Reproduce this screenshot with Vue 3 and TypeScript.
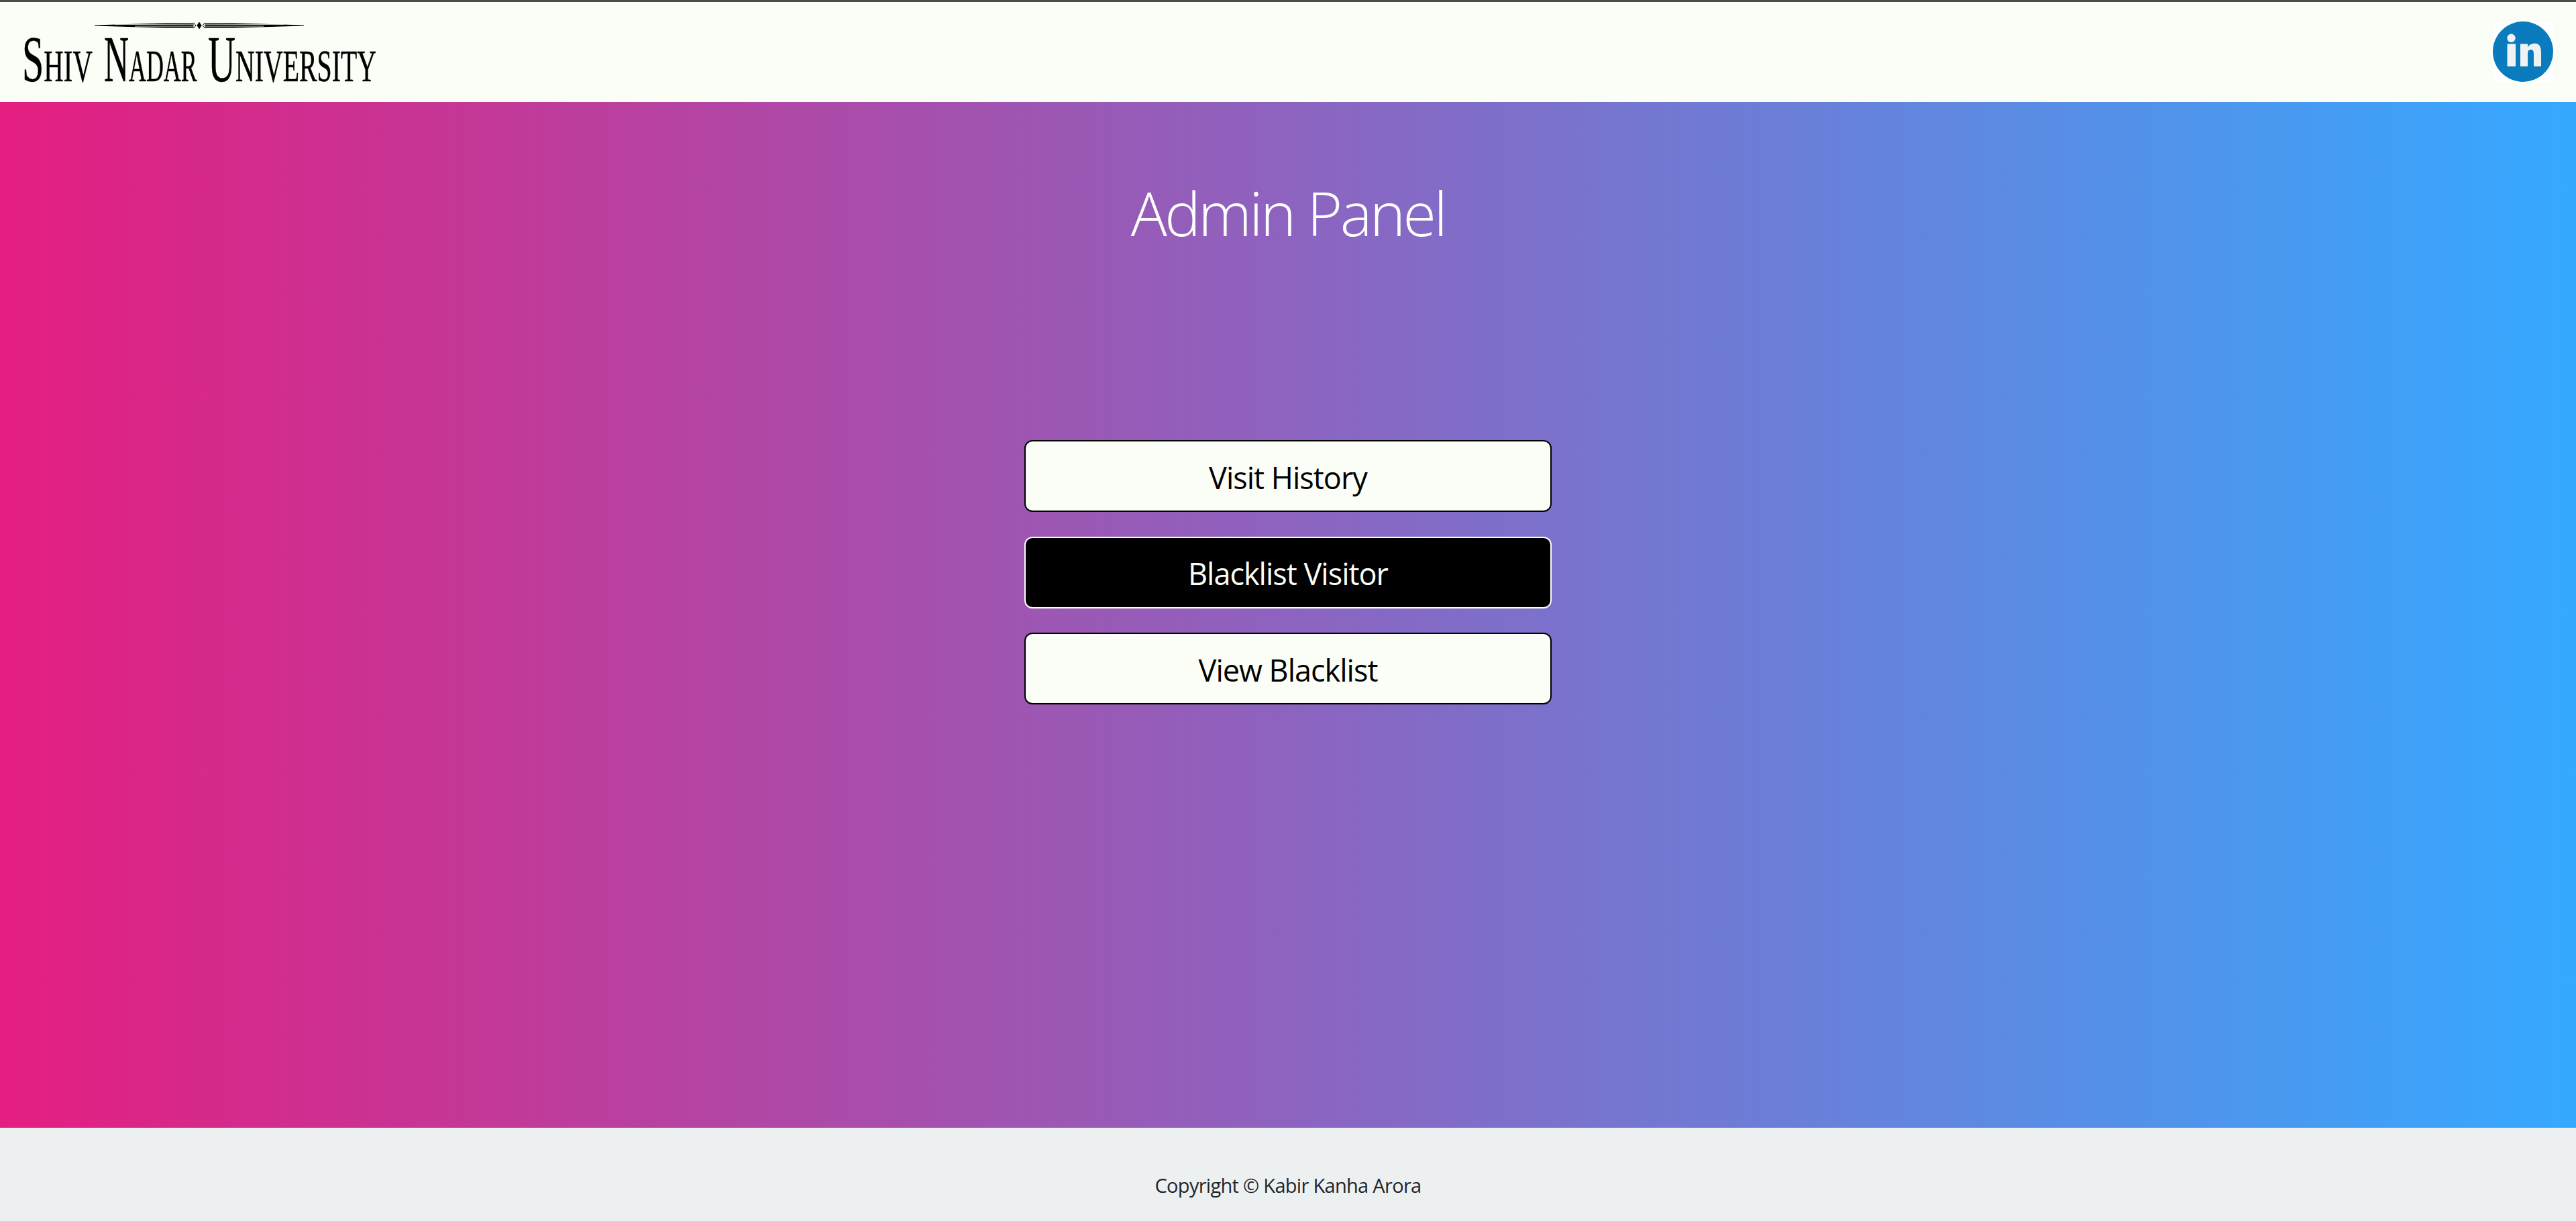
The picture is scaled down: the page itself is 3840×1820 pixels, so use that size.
<script setup lang="ts">
const actions: { label: string; dark: boolean }[] = [
  { label: 'Visit History', dark: false },
  { label: 'Blacklist Visitor', dark: true },
  { label: 'View Blacklist', dark: false },
];
</script>

<template>
  <div class="page">
    <header class="nav">
      <a class="brand">
        <svg class="rule" width="312" height="10" viewBox="0 0 312 10">
          <path d="M0 4.4 L50 3 L105 1.6 L147.5 1.5 L147.5 8.5 L105 8.4 L50 7 L0 5.6 Z" fill="#000" />
          <path d="M164.5 1.5 L207 1.6 L262 3 L312 4.4 L312 5.6 L262 7 L207 8.4 L164.5 8.5 Z" fill="#000" />
          <path d="M30 3.6 L147.5 3.2 M164.5 3.2 L282 3.6 M60 6.1 H147.5 M164.5 6.1 H252" stroke="#fbfef7" stroke-width="0.9" opacity="0.8" />
          <path d="M156 -0.5 L159.6 5 L156 10.5 L152.4 5 Z" fill="#000" />
          <path d="M147.5 0.8 L151 5 L147.5 9.2 M164.5 0.8 L161 5 L164.5 9.2" fill="none" stroke="#000" stroke-width="1" />
        </svg>
        <span class="wordmark">
          <span class="word word-1"><span class="word-text"><b>S</b>HIV</span></span>
          <span class="word word-2"><span class="word-text"><b>N</b>ADAR</span></span>
          <span class="word word-3"><span class="word-text"><b>U</b>NIVERSITY</span></span>
        </span>
      </a>
      <svg class="linkedin" width="90" height="90" viewBox="0 0 90 90">
        <rect width="90" height="90" fill="#fff" />
        <circle cx="45" cy="45" r="45" fill="#0a7cbd" />
        <circle cx="27.5" cy="24.8" r="6.2" fill="#f1f2f4" />
        <rect x="21.5" y="33.5" width="12.5" height="33.5" fill="#f1f2f4" />
        <path d="M41 33.5 H52 V38.5 C54 35 58 32.8 62.5 32.8 C70 32.8 72 38.5 72 46.5 V67 H61 V48.5 C61 44.5 60 42 56.5 42 C53 42 52 44.8 52 48.5 V67 H41 Z" fill="#f1f2f4" />
      </svg>
    </header>

    <main class="hero">
      <h1 class="title">Admin Panel</h1>
      <div class="actions">
        <button v-for="a in actions" :key="a.label" class="action" :class="{ dark: a.dark }">{{ a.label }}</button>
      </div>
    </main>

    <footer class="foot">
      <p class="copy">Copyright © Kabir Kanha Arora</p>
    </footer>
  </div>
</template>

<style>
html, body { margin: 0; padding: 0; }
</style>

<style scoped>
.page {
  display: flex;
  flex-direction: column;
  height: 1820px;
  overflow: hidden;
  font-family: "Open Sans", "Noto Sans", sans-serif;
}
.nav {
  flex: 0 0 149px;
  border-top: 3px solid #4d4d4d;
  background: #fbfef7;
  display: flex;
  justify-content: space-between;
  padding: 0 34px 0 36px;
}
.brand {
  display: flex;
  flex-direction: column;
  width: 524px;
  padding-top: 30px;
}
.rule {
  display: block;
  margin-left: 105px;
  overflow: visible;
}
.wordmark {
  display: flex;
  margin: 1px 0 0 -3px;
  width: 527px;
}
.word {
  display: block;
  height: 90px;
  white-space: nowrap;
}
.word-1 { width: 99px; }
.word-2 { width: 140px; margin-left: 23px; }
.word-3 { width: 243px; margin-left: 15px; }
.word-text {
  display: inline-block;
  font-family: "Liberation Serif", serif;
  font-size: 68px;
  line-height: 90px;
  color: #000;
  -webkit-text-stroke: 0.5px #000;
  transform-origin: 0 0;
}
.word-1 .word-text { transform: scaleX(0.6); }
.word-2 .word-text { transform: scaleX(0.528); }
.word-3 .word-text { transform: scaleX(0.585); }
.word-text b {
  font-weight: 400;
  font-size: 97px;
}
.linkedin {
  margin-top: 29px;
}
.hero {
  flex: 1;
  display: flex;
  flex-direction: column;
  align-items: center;
  background: linear-gradient(90deg, #e41e80 0%, #35a9ff 100%);
}
.title {
  margin: 105px 0 0;
  font-size: 90px;
  line-height: 120px;
  font-weight: 300;
  color: #fff;
  letter-spacing: -3.5px;
}
.actions {
  display: flex;
  flex-direction: column;
  gap: 36.5px;
  margin-top: 279px;
}
.action {
  box-sizing: border-box;
  width: 786px;
  height: 107px;
  border: 2px solid #000;
  border-radius: 12px;
  background: #fbfef7;
  color: #000;
  font-family: inherit;
  font-size: 45px;
  letter-spacing: -1px;
  padding: 3px 0 0;
}
.action.dark {
  background: #000;
  border-color: #fbfef7;
  color: #fbfef7;
}
.foot {
  flex: 0 0 139px;
  background: #ecf0f1;
  display: flex;
  justify-content: center;
}
.copy {
  margin: 66px 0 0;
  font-size: 29px;
  line-height: 40px;
  color: #212529;
  letter-spacing: -0.7px;
}
</style>
